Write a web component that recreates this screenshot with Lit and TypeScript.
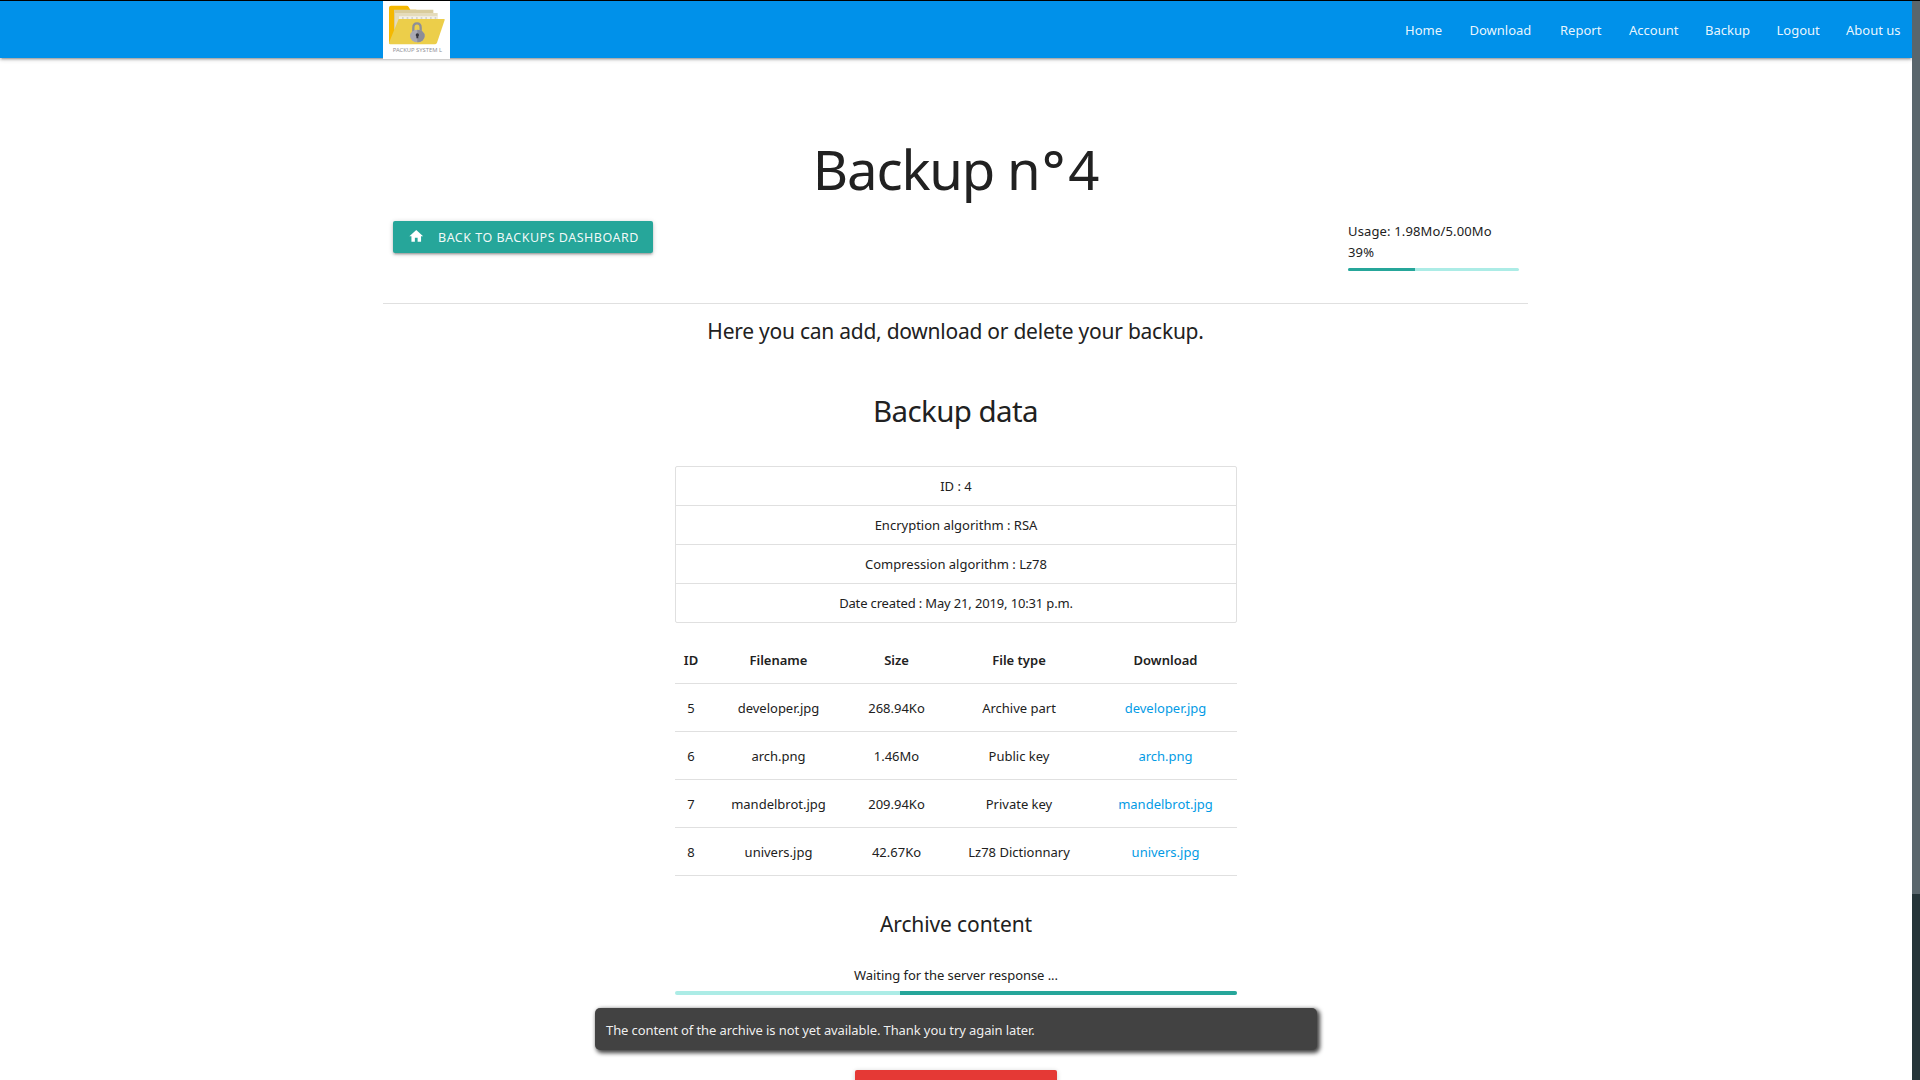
import { LitElement, html, css, svg } from "lit";
import { customElement } from "lit/decorators.js";

const NAV = ["Home", "Download", "Report", "Account", "Backup", "Logout", "About us"];

const DETAILS = [
  "ID : 4",
  "Encryption algorithm : RSA",
  "Compression algorithm : Lz78",
  "Date created : May 21, 2019, 10:31 p.m.",
];

const FILES = [
  ["5", "developer.jpg", "268.94Ko", "Archive part"],
  ["6", "arch.png", "1.46Mo", "Public key"],
  ["7", "mandelbrot.jpg", "209.94Ko", "Private key"],
  ["8", "univers.jpg", "42.67Ko", "Lz78 Dictionnary"],
];

const logo = svg`
  <rect width="201" height="176" fill="#fff"/>
  <path d="M18 126V20q0-6 6-6h47q4 0 6 4l5 8h18v100z" fill="#f5b800"/>
  <path d="M33 26h118v60H33z" fill="#d9cc9d"/>
  <path d="M36 36h128v50H36z" fill="#e5dcbc"/>
  <path d="M48 46h116v30H48z" fill="#f2f0ea"/>
  <path d="M57 51h106" stroke="#c9c8c4" stroke-width="5" stroke-dasharray="5 9"/>
  <path d="M47 54h136q3 0 2 3l-23 68q-2 5-7 5H22q-5 0-4-5z" fill="#ecce4a"/>
  <path d="M91 96V80q0-13 11-13t11 13v16" fill="none" stroke="#8e8f98" stroke-width="7"/>
  <ellipse cx="103" cy="105" rx="22" ry="19" fill="#a9a9b3"/>
  <path d="M103 86a22 19 0 0 1 0 38z" fill="#8d8d97"/>
  <circle cx="103" cy="102" r="5" fill="#34343c"/>
  <path d="M101 103h4l1 9h-6z" fill="#34343c"/>
  <text x="29" y="153" class="logo-text" textLength="148" lengthAdjust="spacingAndGlyphs">PACKUP SYSTEM L</text>
`;

@customElement("app-root")
export class AppRoot extends LitElement {
  static styles = css`
    :host {
      display: flex;
      box-sizing: border-box;
      width: 1920px;
      height: 1080px;
      overflow: hidden;
      border-top: 1px solid #000;
      background: #fff;
      color: #212121;
      font: 13px/21px "Noto Sans", "Open Sans", sans-serif;
    }
    * { box-sizing: border-box; }
    h1, h4, h5 { margin: 0; font-weight: 400; text-align: center; }
    .page { width: 1912px; height: 1079px; overflow: hidden; position: relative; }
    .nav {
      display: flex;
      justify-content: space-between;
      height: 57px;
      padding-left: 383px;
      background: #0091ea;
      box-shadow: 0 2px 2px 0 rgba(0,0,0,.14), 0 3px 1px -2px rgba(0,0,0,.12), 0 1px 5px 0 rgba(0,0,0,.2);
    }
    .logo { display: block; width: 67px; height: 58px; }
    .logo-text { font: 14px "Noto Sans", sans-serif; fill: #919197; }
    .links {
      display: grid;
      grid-template-columns: 64.5px 90.5px 69px 76px 71.5px 69.5px 66px;
      height: 57px;
    }
    .links a { line-height: 58px; color: rgba(255,255,255,.93); white-space: nowrap; }
    .container { width: 1145px; margin: 0 auto 0 383px; }
    .title { padding-top: 71px; height: 163px; font-size: 54.5px; line-height: 80px; letter-spacing: -1.2px; }
    .degree { margin: 0 4px 0 2.5px; font-weight: 500; }
    .toolbar {
      display: flex;
      justify-content: space-between;
      height: 83px;
      padding: 0 9px 0 10px;
      border-bottom: 1px solid #e0e0e0;
    }
    .back {
      display: flex;
      align-items: center;
      width: 260px;
      height: 32px;
      padding-left: 15px;
      border-radius: 2px;
      background: #26a69a;
      color: rgba(255,255,255,.95);
      font-size: 12.5px;
      letter-spacing: .5px;
      white-space: nowrap;
      box-shadow: 0 2px 2px 0 rgba(0,0,0,.14), 0 3px 1px -2px rgba(0,0,0,.12), 0 1px 5px 0 rgba(0,0,0,.2);
    }
    .home { width: 16.5px; height: 16.5px; margin: -1px 13.5px 0 0; fill: #fff; }
    .usage { width: 171px; letter-spacing: .14px; }
    .bar { overflow: hidden; border-radius: 2px; background: #acece6; }
    .fill { height: 100%; background: #26a69a; }
    .usage .bar { height: 3px; margin-top: 5px; }
    .lead { height: 76px; padding-top: 11px; font-size: 21px; line-height: 32px; letter-spacing: -.25px; }
    .sub { height: 86px; padding-top: 9px; font-size: 29.5px; line-height: 44px; letter-spacing: -.6px; }
    .content { width: 562px; margin-left: 292px; text-align: center; }
    .collection { border: 1px solid #e0e0e0; border-radius: 2px; height: 157px; }
    .item { height: 39px; line-height: 38px; border-bottom: 1px solid #e0e0e0; }
    .item:last-child { border-bottom: 0; letter-spacing: -.15px; }
    .table { margin-top: 13px; }
    .row {
      display: grid;
      grid-template-columns: 32px 143px 93px 152px 141px;
      height: 48px;
      line-height: 48px;
      border-bottom: 1px solid #e0e0e0;
    }
    .head { font-weight: 600; }
    .row a { color: #039be5; }
    .archive { height: 89px; padding-top: 32px; font-size: 21px; line-height: 32px; letter-spacing: -.12px; }
    .waiting { letter-spacing: -.06px; }
    .waiting .bar { height: 4px; margin-top: 5px; }
    .waiting .fill { margin-left: auto; }
    .delete {
      width: 202px;
      height: 32px;
      margin: 75px auto 0;
      border-radius: 2px;
      background: #e53935;
      box-shadow: 0 1px 5px rgba(0,0,0,.2);
    }
    .toast {
      position: absolute;
      left: 595px;
      top: 1007px;
      width: 722px;
      height: 42px;
      padding-left: 11px;
      border-radius: 5px;
      background: #424242;
      color: rgba(255,255,255,.93);
      line-height: 44px;
      letter-spacing: -.1px;
      box-shadow: 2px 2px 4px 1px rgba(0,0,0,.75);
    }
    .scroll { width: 8px; background: #263539; }
    .thumb { height: 893px; background: #5a666c; }
  `;

  render() {
    return html`
      <div class="page">
        <nav class="nav">
          <svg class="logo" viewBox="0 0 201 174" preserveAspectRatio="none">${logo}</svg>
          <div class="links">${NAV.map((n) => html`<a>${n}</a>`)}</div>
        </nav>
        <main class="container">
          <h1 class="title">Backup n<span class="degree">°</span>4</h1>
          <div class="toolbar">
            <a class="back">
              <svg class="home" viewBox="0 0 24 24"><path d="M10 20v-6h4v6h5v-8h3L12 3 2 12h3v8z"/></svg>
              <span>BACK TO BACKUPS DASHBOARD</span>
            </a>
            <div class="usage">
              <div>Usage: 1.98Mo/5.00Mo</div>
              <div>39%</div>
              <div class="bar"><div class="fill" style="width:39.2%"></div></div>
            </div>
          </div>
          <h5 class="lead">Here you can add, download or delete your backup.</h5>
          <h4 class="sub">Backup data</h4>
          <section class="content">
            <div class="collection">${DETAILS.map((d) => html`<div class="item">${d}</div>`)}</div>
            <div class="table">
              <div class="row head">
                ${["ID", "Filename", "Size", "File type", "Download"].map((h) => html`<span>${h}</span>`)}
              </div>
              ${FILES.map((f) => html`
                <div class="row">${f.map((c) => html`<span>${c}</span>`)}<a>${f[1]}</a></div>`)}
            </div>
            <h5 class="archive">Archive content</h5>
            <div class="waiting">
              <div>Waiting for the server response ...</div>
              <div class="bar"><div class="fill" style="width:60%"></div></div>
            </div>
            <div class="delete"></div>
          </section>
        </main>
        <div class="toast">The content of the archive is not yet available. Thank you try again later.</div>
      </div>
      <div class="scroll"><div class="thumb"></div></div>
    `;
  }
}
